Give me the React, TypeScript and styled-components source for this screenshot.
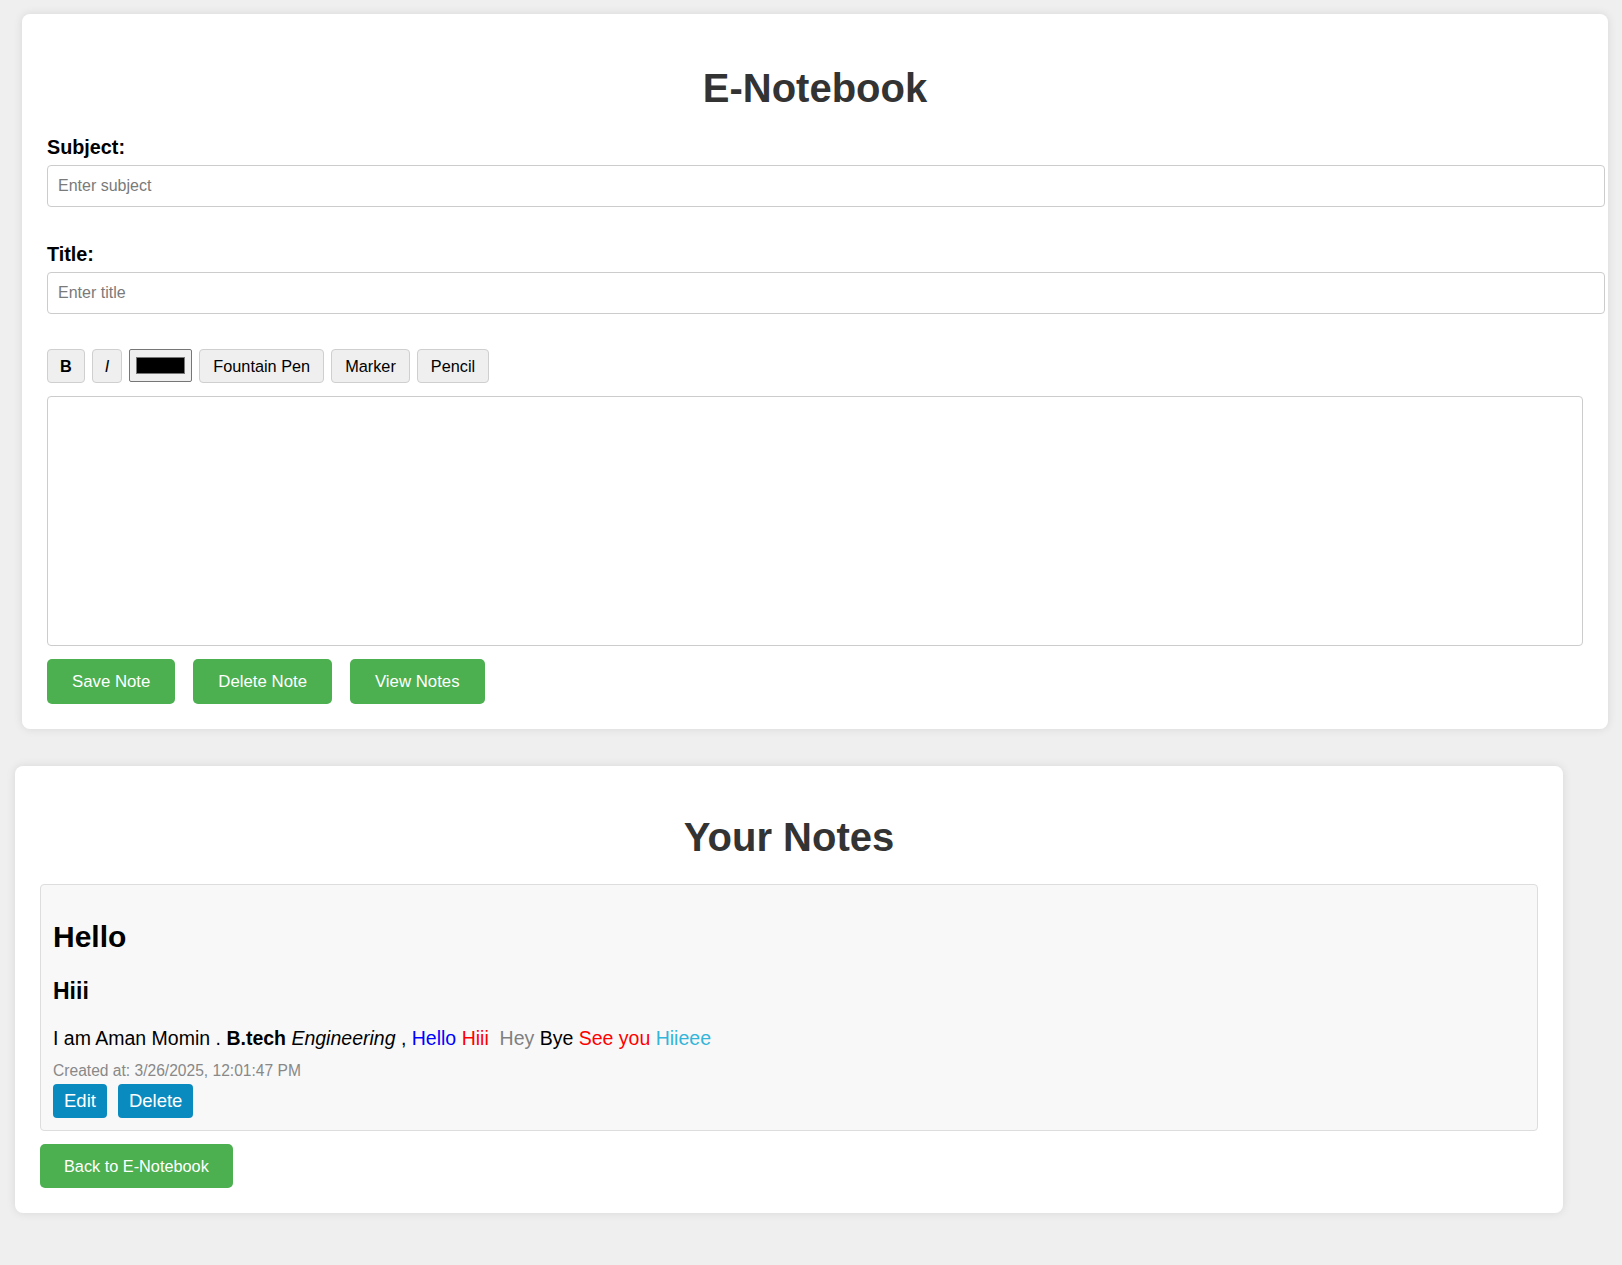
import React from 'react';
import styled, { createGlobalStyle } from 'styled-components';

const GlobalStyle = createGlobalStyle`
  html, body {
    margin: 0;
    padding: 0;
    background: #efefef;
    font-family: "Liberation Sans", Arial, sans-serif;
  }
`;

function App() {
  return (
    <>
      <GlobalStyle />
      <Page>
        <EditorCard>
          <Heading $top={27} $bottom={25}>
            E-Notebook
          </Heading>

          <Label>Subject:</Label>
          <TextInput placeholder="Enter subject" />

          <Label>Title:</Label>
          <TextInput placeholder="Enter title" />

          <Toolbar>
            <ToolButton $pad={12}>
              <b>B</b>
            </ToolButton>
            <ToolButton $pad={12}>
              <i>I</i>
            </ToolButton>
            <ColorPicker>
              <Swatch />
            </ColorPicker>
            <ToolButton>Fountain Pen</ToolButton>
            <ToolButton>Marker</ToolButton>
            <ToolButton>Pencil</ToolButton>
          </Toolbar>

          <Editor contentEditable suppressContentEditableWarning />

          <ActionRow>
            <GreenButton>Save Note</GreenButton>
            <GreenButton>Delete Note</GreenButton>
            <GreenButton>View Notes</GreenButton>
          </ActionRow>
        </EditorCard>

        <NotesCard>
          <Heading $top={24} $bottom={24}>
            Your Notes
          </Heading>

          <NoteItem>
            <NoteSubject>Hello</NoteSubject>
            <NoteTitle>Hiii</NoteTitle>
            <NoteBody>
              I am Aman Momin . <b>B.tech</b> <i>Engineering</i> ,{' '}
              <Ink $color="#0000ff">Hello</Ink> <Ink $color="#ff0000">Hiii</Ink>
              {'\u00a0 '}
              <Ink $color="#808080">Hey</Ink> Bye{' '}
              <Ink $color="#ff0000">See you</Ink>{' '}
              <Ink $color="#33b5d9">Hiieee</Ink>
            </NoteBody>
            <CreatedAt>Created at: 3/26/2025, 12:01:47 PM</CreatedAt>
            <NoteActions>
              <BlueButton>Edit</BlueButton>
              <BlueButton>Delete</BlueButton>
            </NoteActions>
          </NoteItem>

          <BackButton>Back to E-Notebook</BackButton>
        </NotesCard>
      </Page>
    </>
  );
}

const Page = styled.div`
  display: flex;
  flex-direction: column;
  padding: 14px 0 52px;
  gap: 37px;
`;

const Card = styled.section`
  background: #fff;
  border-radius: 8px;
  box-shadow: 0 0 10px rgba(0, 0, 0, 0.1);
  padding: 25px;
`;

const EditorCard = styled(Card)`
  margin: 0 14px 0 22px;
`;

const NotesCard = styled(Card)`
  margin: 0 59px 0 15px;
`;

const Heading = styled.h1<{ $top: number; $bottom: number }>`
  margin: ${(p) => p.$top}px 0 ${(p) => p.$bottom}px;
  text-align: center;
  font-size: 40px;
  font-weight: bold;
  color: #333;
`;

const Label = styled.label`
  display: block;
  margin-bottom: 6px;
  font-size: 19.8px;
  font-weight: bold;
  color: #000;
`;

const TextInput = styled.input`
  display: block;
  width: 100%;
  margin: 0 0 35.5px;
  padding: 11px 10px;
  border: 1px solid #ccc;
  border-radius: 4px;
  font-family: inherit;
  font-size: 16px;
  color: #000;
  background: #fff;
  outline: none;

  &::placeholder {
    color: #7a7a7a;
  }
`;

const Toolbar = styled.div`
  display: flex;
  gap: 7px;
  margin-bottom: 13px;
`;

const ToolButton = styled.button<{ $pad?: number }>`
  height: 34px;
  padding: 0 ${(p) => p.$pad ?? 13}px;
  border: 1px solid #cfcfcf;
  border-radius: 4px;
  background: #efefef;
  color: #000;
  font-family: inherit;
  font-size: 16.3px;
  cursor: pointer;
`;

const ColorPicker = styled.div`
  box-sizing: border-box;
  width: 63px;
  height: 33px;
  padding: 7px 6px;
  border: 1px solid #767676;
  border-radius: 2px;
  background: #efefef;
`;

const Swatch = styled.div`
  width: 100%;
  height: 100%;
  background: #000;
  border: 1px solid #777;
  box-sizing: border-box;
`;

const Editor = styled.div`
  box-sizing: border-box;
  width: 100%;
  height: 250px;
  border: 1px solid #ccc;
  border-radius: 4px;
  outline: none;
  background: #fff;
`;

const ActionRow = styled.div`
  display: flex;
  gap: 18px;
  margin-top: 13px;
`;

const GreenButton = styled.button`
  padding: 12.5px 25px;
  border: none;
  border-radius: 5px;
  background: #4caf50;
  color: #fff;
  font-family: inherit;
  font-size: 16.8px;
  cursor: pointer;
`;

const NoteItem = styled.article`
  padding: 12px;
  border: 1px solid #ddd;
  border-radius: 4px;
  background: #f8f8f8;
`;

const NoteSubject = styled.h2`
  margin: 23px 0 24px;
  font-size: 30px;
  font-weight: bold;
  color: #000;
`;

const NoteTitle = styled.h3`
  margin: 0 0 22px;
  font-size: 23px;
  font-weight: bold;
  color: #000;
`;

const NoteBody = styled.p`
  margin: 0 0 12px;
  font-size: 19.5px;
  color: #000;
`;

const Ink = styled.span<{ $color: string }>`
  color: ${(p) => p.$color};
`;

const CreatedAt = styled.div`
  font-size: 15.6px;
  color: #888;
  margin-bottom: 4px;
`;

const NoteActions = styled.div`
  display: flex;
  gap: 11px;
`;

const BlueButton = styled.button`
  padding: 6px 11px;
  border: none;
  border-radius: 4px;
  background: #0a8bbf;
  color: #fff;
  font-family: inherit;
  font-size: 18.5px;
  cursor: pointer;
`;

const BackButton = styled.button`
  margin-top: 13px;
  padding: 12.5px 24px;
  border: none;
  border-radius: 5px;
  background: #4caf50;
  color: #fff;
  font-family: inherit;
  font-size: 16.3px;
  cursor: pointer;
`;

export default App;
